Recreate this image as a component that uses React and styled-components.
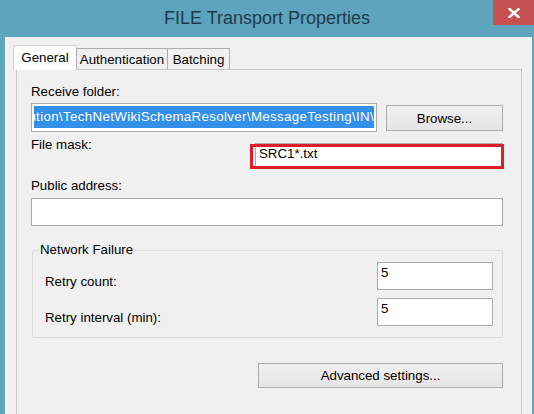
import styled, { createGlobalStyle } from "styled-components";

const GlobalStyle = createGlobalStyle`
  html, body {
    margin: 0;
    padding: 0;
    background: #5fa4bd;
  }
  * {
    box-sizing: border-box;
  }
`;

const FONT = `"Liberation Sans", Arial, sans-serif`;

const tabs = [
  { label: "General", width: 64 },
  { label: "Authentication", width: 92 },
  { label: "Batching", width: 63 },
];

const App = () => {
  return (
    <>
      <GlobalStyle />
      <Window>
        <TitleBar>
          <span />
          <Title>FILE Transport Properties</Title>
          <CloseButton aria-label="Close">
            <svg width="12" height="10" viewBox="0 0 12 10">
              <path
                d="M1.5 1 L10.5 9 M10.5 1 L1.5 9"
                stroke="#fff"
                strokeWidth="2.4"
                strokeLinecap="square"
              />
            </svg>
          </CloseButton>
        </TitleBar>

        <Client>
          <TabRow>
            {tabs.map((t, i) => (
              <Tab key={t.label} $active={i === 0} $width={t.width}>
                {t.label}
              </Tab>
            ))}
          </TabRow>

          <Panel>
            <Label>Receive folder:</Label>
            <FolderRow>
              <TextBox $height={29} $width={346}>
                <Selection>
                  <span>ution\TechNetWikiSchemaResolver\MessageTesting\IN\</span>
                </Selection>
              </TextBox>
              <Button $width={117} $height={26}>
                Browse...
              </Button>
            </FolderRow>

            <MaskRow>
              <Label>File mask:</Label>
              <MaskBox>
                <TextBox $height={26}>
                  <Value>SRC1*.txt</Value>
                </TextBox>
                <Highlight />
              </MaskBox>
            </MaskRow>

            <Label $top={9}>Public address:</Label>
            <TextBox $height={28} $top={4} />

            <Group>
              <Legend>Network Failure</Legend>
              <GroupRow>
                <Label>Retry count:</Label>
                <TextBox $height={28} $width={116}>
                  <Value $pad={2}>5</Value>
                </TextBox>
              </GroupRow>
              <GroupRow>
                <Label>Retry interval (min):</Label>
                <TextBox $height={28} $width={116}>
                  <Value $pad={2}>5</Value>
                </TextBox>
              </GroupRow>
            </Group>

            <Footer>
              <Button $width={245} $height={25}>
                Advanced settings...
              </Button>
            </Footer>
          </Panel>
        </Client>
      </Window>
    </>
  );
};

const Window = styled.div`
  width: 534px;
  height: 414px;
  overflow: hidden;
  display: flex;
  flex-direction: column;
  background: #5fa4bd;
  font-family: ${FONT};
`;

const TitleBar = styled.div`
  height: 37px;
  flex: none;
  display: grid;
  grid-template-columns: 41px 1fr 41px;
  align-items: start;
`;

const Title = styled.div`
  text-align: center;
  font-size: 18px;
  line-height: 37px;
  color: #1e3b4b;
`;

const CloseButton = styled.div`
  height: 25px;
  background: #c75050;
  display: flex;
  align-items: center;
  justify-content: center;
`;

const Client = styled.div`
  flex: 1;
  margin: 0 2px 0 5px;
  background: #f0f0f0;
  border-left: 1px solid #f7f9fa;
  padding: 8px 10px 0 10px;
  display: flex;
  flex-direction: column;
`;

const TabRow = styled.div`
  display: flex;
  align-items: flex-end;
  height: 24px;
  margin-left: -3px;
  position: relative;
  z-index: 1;
`;

const Tab = styled.div`
  width: ${(p) => p.$width}px;
  height: ${(p) => (p.$active ? 25 : 21)}px;
  margin-bottom: ${(p) => (p.$active ? -1 : 0)}px;
  padding-top: ${(p) => (p.$active ? 4 : 3)}px;
  text-align: center;
  font-size: 13.3px;
  line-height: 16px;
  color: #000;
  background: ${(p) => (p.$active ? "#fff" : "#f0f0f0")};
  border: 1px solid ${(p) => (p.$active ? "#d2d2d2" : "#adadad")};
  border-bottom: none;
  & + & {
    margin-left: ${(p) => (p.$active ? 0 : -1)}px;
  }
`;

const Panel = styled.div`
  flex: 1;
  border: 1px solid #c6c6c6;
  background: #f0f0f0;
  padding: 14px 18px 0 14px;
  display: flex;
  flex-direction: column;
  min-height: 360px;
`;

const Label = styled.div`
  font-size: 13.3px;
  line-height: 16px;
  color: #000;
  margin-top: ${(p) => p.$top || 0}px;
  white-space: nowrap;
`;

const FolderRow = styled.div`
  display: flex;
  align-items: flex-start;
  justify-content: space-between;
  margin-top: 3px;
`;

const TextBox = styled.div`
  width: ${(p) => (p.$width ? `${p.$width}px` : "100%")};
  height: ${(p) => p.$height}px;
  margin-top: ${(p) => p.$top || 0}px;
  flex: none;
  background: #fff;
  border: 1px solid #abadb3;
  padding: 0 2px;
  overflow: hidden;
  font-size: 13.3px;
  line-height: 16px;
  color: #000;
`;

const Selection = styled.div`
  margin-top: 2px;
  height: 22px;
  background: #3390ea;
  color: #fff;
  line-height: 21px;
  letter-spacing: 0.35px;
  display: flex;
  justify-content: flex-end;
  white-space: nowrap;
  overflow: hidden;
  span {
    flex: none;
  }
`;

const Value = styled.div`
  padding-top: ${(p) => (p.$pad != null ? p.$pad : 1.5)}px;
  padding-left: 1px;
  white-space: nowrap;
`;

const Button = styled.div`
  width: ${(p) => p.$width}px;
  height: ${(p) => p.$height}px;
  margin-top: 2px;
  flex: none;
  border: 1px solid #acacac;
  background: linear-gradient(#f0f0f0, #e5e5e5);
  font-size: 13.3px;
  color: #000;
  display: flex;
  align-items: center;
  justify-content: center;
`;

const MaskRow = styled.div`
  display: grid;
  grid-template-columns: 224px 1fr;
  margin-top: 5px;
`;

const MaskBox = styled.div`
  position: relative;
  margin-top: 6px;
`;

const Highlight = styled.div`
  position: absolute;
  left: -5px;
  top: 1px;
  right: -1px;
  bottom: 0;
  border: 3px solid #dc1f2b;
  pointer-events: none;
`;

const Group = styled.fieldset`
  margin: 16px 0 0 1px;
  padding: 4px 9px 11px 12px;
  min-inline-size: 0;
  border: 1px solid #dcdcdc;
  border-radius: 2px;
  display: flex;
  flex-direction: column;
  gap: 8px;
`;

const Legend = styled.legend`
  margin-left: -7px;
  padding: 0 2px;
  font-size: 13.3px;
  line-height: 16px;
  color: #000;
`;

const GroupRow = styled.div`
  display: flex;
  align-items: flex-end;
  justify-content: space-between;
`;

const Footer = styled.div`
  display: flex;
  justify-content: flex-end;
  margin-top: 23px;
`;

export default App;
